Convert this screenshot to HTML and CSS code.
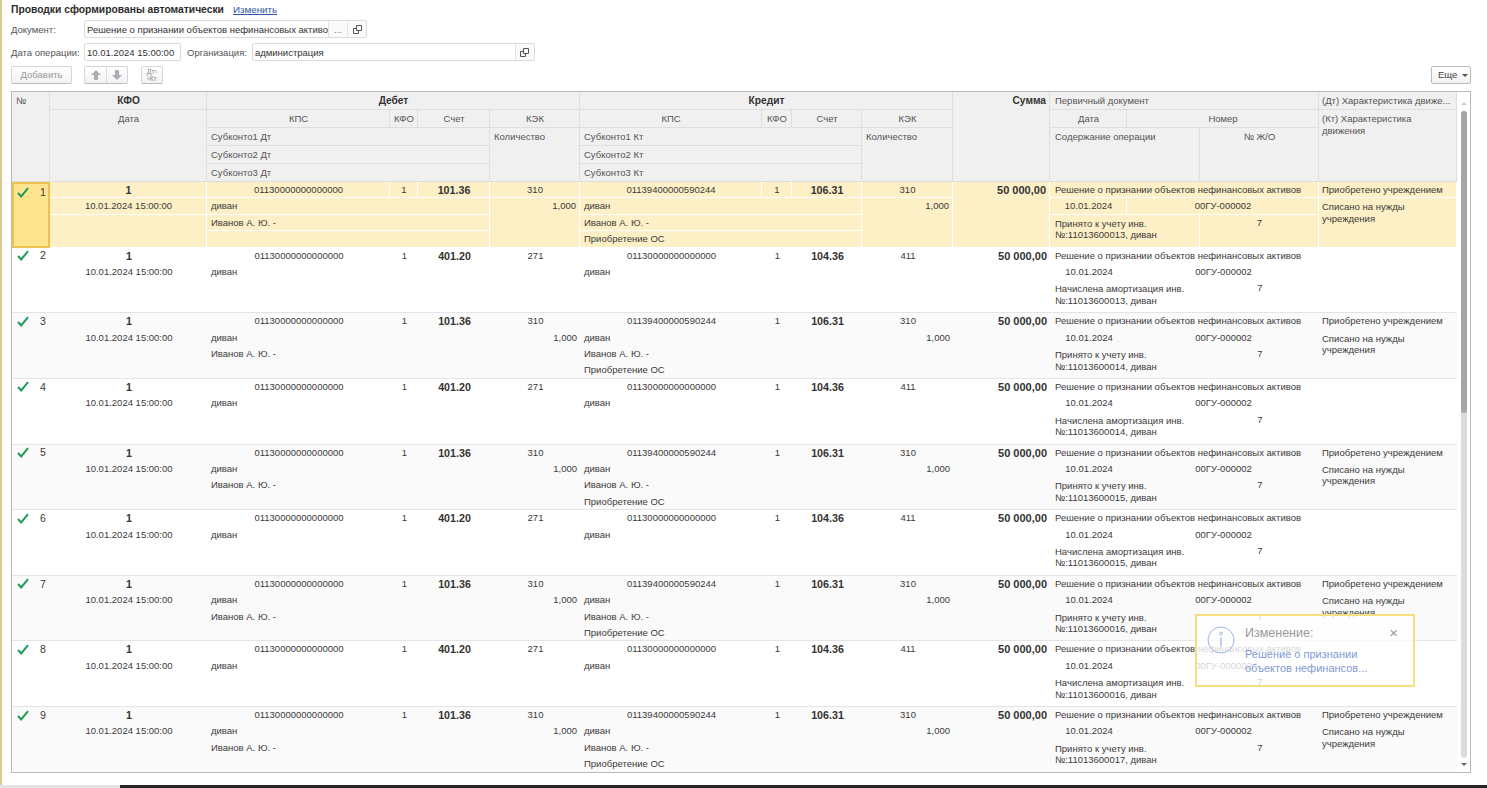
FILE: index.html
```html
<!DOCTYPE html>
<html lang="ru">
<head>
<meta charset="utf-8">
<title>Проводки</title>
<link rel="stylesheet" href="styles.css">
</head>
<body>
<div class="page">
  <div class="form">
    <div class="title-row"><b class="title">Проводки сформированы автоматически</b><a class="link">Изменить</a></div>
    <div class="field-row">
      <label class="lbl lbl-first">Документ:</label>
      <div class="input doc-input"><span class="val">Решение о признании объектов нефинансовых активов</span><span class="ibtn ibtn-dots">...</span><span class="ibtn"><svg width="11" height="11" viewBox="0 0 11 11"><path d="M4.5 1.5h5v5h-5zM1.5 4.5h3M1.5 4.5v5h5v-3" fill="none" stroke="#555"/></svg></span></div>
    </div>
    <div class="field-row">
      <label class="lbl lbl-first">Дата операции:</label>
      <div class="input date-input"><span class="val">10.01.2024 15:00:00</span></div>
      <label class="lbl lbl-org">Организация:</label>
      <div class="input org-input"><span class="val">администрация</span><span class="ibtn"><svg width="11" height="11" viewBox="0 0 11 11"><path d="M4.5 1.5h5v5h-5zM1.5 4.5h3M1.5 4.5v5h5v-3" fill="none" stroke="#555"/></svg></span></div>
    </div>
    <div class="toolbar">
      <button class="btn btn-add">Добавить</button>
      <div class="btn-group">
        <span class="gbtn"><svg width="12" height="12" viewBox="0 0 12 12"><path d="M6 1l5 5H8v5H4V6H1z" fill="#aab0b6"/></svg></span>
        <span class="gbtn"><svg width="12" height="12" viewBox="0 0 12 12"><path d="M6 11l5-5H8V1H4v5H1z" fill="#aab0b6"/></svg></span>
      </div>
      <span class="btn-dtkt"><span>Дт<i>›</i></span><span><i>‹</i>Кт</span></span>
      <button class="btn btn-more">Еще <span class="caret"></span></button>
    </div>
  </div>

  <div class="table">
    <div class="tbody">
      <div class="thead grid">
        <div class="h c1 rall">№</div>
        <div class="h c2 r1 hb ctr">КФО</div>
        <div class="h c2 r2e ctr">Дата</div>
        <div class="h c3-6 r1 hb ctr">Дебет</div>
        <div class="h c3 r2 ctr">КПС</div><div class="h c4 r2 ctr">КФО</div><div class="h c5 r2 ctr">Счет</div><div class="h c6 r2 ctr">КЭК</div>
        <div class="h c3-5 r3">Субконто1 Дт</div><div class="h c3-5 r4">Субконто2 Дт</div><div class="h c3-5 r5">Субконто3 Дт</div>
        <div class="h c6 r3e">Количество</div>
        <div class="h c7-10 r1 hb ctr">Кредит</div>
        <div class="h c7 r2 ctr">КПС</div><div class="h c8 r2 ctr">КФО</div><div class="h c9 r2 ctr">Счет</div><div class="h c10 r2 ctr">КЭК</div>
        <div class="h c7-9 r3">Субконто1 Кт</div><div class="h c7-9 r4">Субконто2 Кт</div><div class="h c7-9 r5">Субконто3 Кт</div>
        <div class="h c10 r3e">Количество</div>
        <div class="h c11 rall hb rgt">Сумма</div>
        <div class="h c12-14 r1 pd">Первичный документ</div>
        <div class="h c12 r2 ctr">Дата</div><div class="h c13-14 r2 ctr">Номер</div>
        <div class="h c12-13 r3e pd">Содержание операции</div><div class="h c14 r3e ctr">№ Ж/О</div>
        <div class="h c15 r1">(Дт) Характеристика движе...</div>
        <div class="h c15 r2e wrap">(Кт) Характеристика движения</div>
      </div>

      <div class="row grid sel">
        <div class="d c1 rr"><span class="num-cell"><svg class="ck" width="12" height="11" viewBox="0 0 12 11"><path d="M1 6l3.2 3.5L11 1.2" fill="none" stroke="#1f9c55" stroke-width="2"/></svg><span class="n">1</span></span></div>
        <div class="d c2 q1 hb ctr">1</div><div class="d c2 q2 ctr">10.01.2024 15:00:00</div><div class="d c2 q3e"></div>
        <div class="d c3 q1 ctr">01130000000000000</div><div class="d c4 q1 ctr">1</div><div class="d c5 q1 hb ctr">101.36</div><div class="d c6 q1 ctr">310</div>
        <div class="d c3-5 q2">диван</div><div class="d c3-5 q3">Иванов А. Ю. -</div><div class="d c3-5 q4"></div>
        <div class="d c6 q2e rgt">1,000</div>
        <div class="d c7 q1 ctr">01139400000590244</div><div class="d c8 q1 ctr">1</div><div class="d c9 q1 hb ctr">106.31</div><div class="d c10 q1 ctr">310</div>
        <div class="d c7-9 q2">диван</div><div class="d c7-9 q3">Иванов А. Ю. -</div><div class="d c7-9 q4">Приобретение ОС</div>
        <div class="d c10 q2e rgt">1,000</div>
        <div class="d c11 rr hb rgt">50 000,00</div>
        <div class="d c12-14 q1 pd">Решение о признании объектов нефинансовых активов</div>
        <div class="d c12 q2 ctr">10.01.2024</div><div class="d c13-14 q2 ctr">00ГУ-000002</div>
        <div class="d c12-13 q3e wrap pd">Принято к учету инв. №:11013600013, диван</div><div class="d c14 q3e ctr">7</div>
        <div class="d c15 q1">Приобретено учреждением</div><div class="d c15 q2e wrap">Списано на нужды учреждения</div>
      </div>

      <div class="row grid">
        <div class="d c1 rr"><span class="num-cell"><svg class="ck" width="12" height="11" viewBox="0 0 12 11"><path d="M1 6l3.2 3.5L11 1.2" fill="none" stroke="#1f9c55" stroke-width="2"/></svg><span class="n">2</span></span></div>
        <div class="d c2 q1 hb ctr">1</div><div class="d c2 q2e ctr">10.01.2024 15:00:00</div>
        <div class="d c3 q1 ctr">01130000000000000</div><div class="d c4 q1 ctr">1</div><div class="d c5 q1 hb ctr">401.20</div><div class="d c6 q1 ctr">271</div>
        <div class="d c3-5 q2">диван</div><div class="d c3-5 q3"></div><div class="d c3-5 q4"></div>
        <div class="d c6 q2e rgt"></div>
        <div class="d c7 q1 ctr">01130000000000000</div><div class="d c8 q1 ctr">1</div><div class="d c9 q1 hb ctr">104.36</div><div class="d c10 q1 ctr">411</div>
        <div class="d c7-9 q2">диван</div><div class="d c7-9 q3"></div><div class="d c7-9 q4"></div>
        <div class="d c10 q2e rgt"></div>
        <div class="d c11 rr hb rgt">50 000,00</div>
        <div class="d c12-14 q1 pd">Решение о признании объектов нефинансовых активов</div>
        <div class="d c12 q2 ctr">10.01.2024</div><div class="d c13-14 q2 ctr">00ГУ-000002</div>
        <div class="d c12-13 q3e wrap pd">Начислена амортизация инв. №:11013600013, диван</div><div class="d c14 q3e ctr">7</div>
        <div class="d c15 q1"></div><div class="d c15 q2e wrap"></div>
      </div>

      <div class="row grid alt">
        <div class="d c1 rr"><span class="num-cell"><svg class="ck" width="12" height="11" viewBox="0 0 12 11"><path d="M1 6l3.2 3.5L11 1.2" fill="none" stroke="#1f9c55" stroke-width="2"/></svg><span class="n">3</span></span></div>
        <div class="d c2 q1 hb ctr">1</div><div class="d c2 q2e ctr">10.01.2024 15:00:00</div>
        <div class="d c3 q1 ctr">01130000000000000</div><div class="d c4 q1 ctr">1</div><div class="d c5 q1 hb ctr">101.36</div><div class="d c6 q1 ctr">310</div>
        <div class="d c3-5 q2">диван</div><div class="d c3-5 q3">Иванов А. Ю. -</div><div class="d c3-5 q4"></div>
        <div class="d c6 q2e rgt">1,000</div>
        <div class="d c7 q1 ctr">01139400000590244</div><div class="d c8 q1 ctr">1</div><div class="d c9 q1 hb ctr">106.31</div><div class="d c10 q1 ctr">310</div>
        <div class="d c7-9 q2">диван</div><div class="d c7-9 q3">Иванов А. Ю. -</div><div class="d c7-9 q4">Приобретение ОС</div>
        <div class="d c10 q2e rgt">1,000</div>
        <div class="d c11 rr hb rgt">50 000,00</div>
        <div class="d c12-14 q1 pd">Решение о признании объектов нефинансовых активов</div>
        <div class="d c12 q2 ctr">10.01.2024</div><div class="d c13-14 q2 ctr">00ГУ-000002</div>
        <div class="d c12-13 q3e wrap pd">Принято к учету инв. №:11013600014, диван</div><div class="d c14 q3e ctr">7</div>
        <div class="d c15 q1">Приобретено учреждением</div><div class="d c15 q2e wrap">Списано на нужды учреждения</div>
      </div>

      <div class="row grid">
        <div class="d c1 rr"><span class="num-cell"><svg class="ck" width="12" height="11" viewBox="0 0 12 11"><path d="M1 6l3.2 3.5L11 1.2" fill="none" stroke="#1f9c55" stroke-width="2"/></svg><span class="n">4</span></span></div>
        <div class="d c2 q1 hb ctr">1</div><div class="d c2 q2e ctr">10.01.2024 15:00:00</div>
        <div class="d c3 q1 ctr">01130000000000000</div><div class="d c4 q1 ctr">1</div><div class="d c5 q1 hb ctr">401.20</div><div class="d c6 q1 ctr">271</div>
        <div class="d c3-5 q2">диван</div><div class="d c3-5 q3"></div><div class="d c3-5 q4"></div>
        <div class="d c6 q2e rgt"></div>
        <div class="d c7 q1 ctr">01130000000000000</div><div class="d c8 q1 ctr">1</div><div class="d c9 q1 hb ctr">104.36</div><div class="d c10 q1 ctr">411</div>
        <div class="d c7-9 q2">диван</div><div class="d c7-9 q3"></div><div class="d c7-9 q4"></div>
        <div class="d c10 q2e rgt"></div>
        <div class="d c11 rr hb rgt">50 000,00</div>
        <div class="d c12-14 q1 pd">Решение о признании объектов нефинансовых активов</div>
        <div class="d c12 q2 ctr">10.01.2024</div><div class="d c13-14 q2 ctr">00ГУ-000002</div>
        <div class="d c12-13 q3e wrap pd">Начислена амортизация инв. №:11013600014, диван</div><div class="d c14 q3e ctr">7</div>
        <div class="d c15 q1"></div><div class="d c15 q2e wrap"></div>
      </div>

      <div class="row grid alt">
        <div class="d c1 rr"><span class="num-cell"><svg class="ck" width="12" height="11" viewBox="0 0 12 11"><path d="M1 6l3.2 3.5L11 1.2" fill="none" stroke="#1f9c55" stroke-width="2"/></svg><span class="n">5</span></span></div>
        <div class="d c2 q1 hb ctr">1</div><div class="d c2 q2e ctr">10.01.2024 15:00:00</div>
        <div class="d c3 q1 ctr">01130000000000000</div><div class="d c4 q1 ctr">1</div><div class="d c5 q1 hb ctr">101.36</div><div class="d c6 q1 ctr">310</div>
        <div class="d c3-5 q2">диван</div><div class="d c3-5 q3">Иванов А. Ю. -</div><div class="d c3-5 q4"></div>
        <div class="d c6 q2e rgt">1,000</div>
        <div class="d c7 q1 ctr">01139400000590244</div><div class="d c8 q1 ctr">1</div><div class="d c9 q1 hb ctr">106.31</div><div class="d c10 q1 ctr">310</div>
        <div class="d c7-9 q2">диван</div><div class="d c7-9 q3">Иванов А. Ю. -</div><div class="d c7-9 q4">Приобретение ОС</div>
        <div class="d c10 q2e rgt">1,000</div>
        <div class="d c11 rr hb rgt">50 000,00</div>
        <div class="d c12-14 q1 pd">Решение о признании объектов нефинансовых активов</div>
        <div class="d c12 q2 ctr">10.01.2024</div><div class="d c13-14 q2 ctr">00ГУ-000002</div>
        <div class="d c12-13 q3e wrap pd">Принято к учету инв. №:11013600015, диван</div><div class="d c14 q3e ctr">7</div>
        <div class="d c15 q1">Приобретено учреждением</div><div class="d c15 q2e wrap">Списано на нужды учреждения</div>
      </div>

      <div class="row grid">
        <div class="d c1 rr"><span class="num-cell"><svg class="ck" width="12" height="11" viewBox="0 0 12 11"><path d="M1 6l3.2 3.5L11 1.2" fill="none" stroke="#1f9c55" stroke-width="2"/></svg><span class="n">6</span></span></div>
        <div class="d c2 q1 hb ctr">1</div><div class="d c2 q2e ctr">10.01.2024 15:00:00</div>
        <div class="d c3 q1 ctr">01130000000000000</div><div class="d c4 q1 ctr">1</div><div class="d c5 q1 hb ctr">401.20</div><div class="d c6 q1 ctr">271</div>
        <div class="d c3-5 q2">диван</div><div class="d c3-5 q3"></div><div class="d c3-5 q4"></div>
        <div class="d c6 q2e rgt"></div>
        <div class="d c7 q1 ctr">01130000000000000</div><div class="d c8 q1 ctr">1</div><div class="d c9 q1 hb ctr">104.36</div><div class="d c10 q1 ctr">411</div>
        <div class="d c7-9 q2">диван</div><div class="d c7-9 q3"></div><div class="d c7-9 q4"></div>
        <div class="d c10 q2e rgt"></div>
        <div class="d c11 rr hb rgt">50 000,00</div>
        <div class="d c12-14 q1 pd">Решение о признании объектов нефинансовых активов</div>
        <div class="d c12 q2 ctr">10.01.2024</div><div class="d c13-14 q2 ctr">00ГУ-000002</div>
        <div class="d c12-13 q3e wrap pd">Начислена амортизация инв. №:11013600015, диван</div><div class="d c14 q3e ctr">7</div>
        <div class="d c15 q1"></div><div class="d c15 q2e wrap"></div>
      </div>

      <div class="row grid alt">
        <div class="d c1 rr"><span class="num-cell"><svg class="ck" width="12" height="11" viewBox="0 0 12 11"><path d="M1 6l3.2 3.5L11 1.2" fill="none" stroke="#1f9c55" stroke-width="2"/></svg><span class="n">7</span></span></div>
        <div class="d c2 q1 hb ctr">1</div><div class="d c2 q2e ctr">10.01.2024 15:00:00</div>
        <div class="d c3 q1 ctr">01130000000000000</div><div class="d c4 q1 ctr">1</div><div class="d c5 q1 hb ctr">101.36</div><div class="d c6 q1 ctr">310</div>
        <div class="d c3-5 q2">диван</div><div class="d c3-5 q3">Иванов А. Ю. -</div><div class="d c3-5 q4"></div>
        <div class="d c6 q2e rgt">1,000</div>
        <div class="d c7 q1 ctr">01139400000590244</div><div class="d c8 q1 ctr">1</div><div class="d c9 q1 hb ctr">106.31</div><div class="d c10 q1 ctr">310</div>
        <div class="d c7-9 q2">диван</div><div class="d c7-9 q3">Иванов А. Ю. -</div><div class="d c7-9 q4">Приобретение ОС</div>
        <div class="d c10 q2e rgt">1,000</div>
        <div class="d c11 rr hb rgt">50 000,00</div>
        <div class="d c12-14 q1 pd">Решение о признании объектов нефинансовых активов</div>
        <div class="d c12 q2 ctr">10.01.2024</div><div class="d c13-14 q2 ctr">00ГУ-000002</div>
        <div class="d c12-13 q3e wrap pd">Принято к учету инв. №:11013600016, диван</div><div class="d c14 q3e ctr">7</div>
        <div class="d c15 q1">Приобретено учреждением</div><div class="d c15 q2e wrap">Списано на нужды учреждения</div>
      </div>

      <div class="row grid">
        <div class="d c1 rr"><span class="num-cell"><svg class="ck" width="12" height="11" viewBox="0 0 12 11"><path d="M1 6l3.2 3.5L11 1.2" fill="none" stroke="#1f9c55" stroke-width="2"/></svg><span class="n">8</span></span></div>
        <div class="d c2 q1 hb ctr">1</div><div class="d c2 q2e ctr">10.01.2024 15:00:00</div>
        <div class="d c3 q1 ctr">01130000000000000</div><div class="d c4 q1 ctr">1</div><div class="d c5 q1 hb ctr">401.20</div><div class="d c6 q1 ctr">271</div>
        <div class="d c3-5 q2">диван</div><div class="d c3-5 q3"></div><div class="d c3-5 q4"></div>
        <div class="d c6 q2e rgt"></div>
        <div class="d c7 q1 ctr">01130000000000000</div><div class="d c8 q1 ctr">1</div><div class="d c9 q1 hb ctr">104.36</div><div class="d c10 q1 ctr">411</div>
        <div class="d c7-9 q2">диван</div><div class="d c7-9 q3"></div><div class="d c7-9 q4"></div>
        <div class="d c10 q2e rgt"></div>
        <div class="d c11 rr hb rgt">50 000,00</div>
        <div class="d c12-14 q1 pd">Решение о признании объектов нефинансовых активов</div>
        <div class="d c12 q2 ctr">10.01.2024</div><div class="d c13-14 q2 ctr">00ГУ-000002</div>
        <div class="d c12-13 q3e wrap pd">Начислена амортизация инв. №:11013600016, диван</div><div class="d c14 q3e ctr">7</div>
        <div class="d c15 q1"></div><div class="d c15 q2e wrap"></div>
      </div>

      <div class="row grid alt">
        <div class="d c1 rr"><span class="num-cell"><svg class="ck" width="12" height="11" viewBox="0 0 12 11"><path d="M1 6l3.2 3.5L11 1.2" fill="none" stroke="#1f9c55" stroke-width="2"/></svg><span class="n">9</span></span></div>
        <div class="d c2 q1 hb ctr">1</div><div class="d c2 q2e ctr">10.01.2024 15:00:00</div>
        <div class="d c3 q1 ctr">01130000000000000</div><div class="d c4 q1 ctr">1</div><div class="d c5 q1 hb ctr">101.36</div><div class="d c6 q1 ctr">310</div>
        <div class="d c3-5 q2">диван</div><div class="d c3-5 q3">Иванов А. Ю. -</div><div class="d c3-5 q4"></div>
        <div class="d c6 q2e rgt">1,000</div>
        <div class="d c7 q1 ctr">01139400000590244</div><div class="d c8 q1 ctr">1</div><div class="d c9 q1 hb ctr">106.31</div><div class="d c10 q1 ctr">310</div>
        <div class="d c7-9 q2">диван</div><div class="d c7-9 q3">Иванов А. Ю. -</div><div class="d c7-9 q4">Приобретение ОС</div>
        <div class="d c10 q2e rgt">1,000</div>
        <div class="d c11 rr hb rgt">50 000,00</div>
        <div class="d c12-14 q1 pd">Решение о признании объектов нефинансовых активов</div>
        <div class="d c12 q2 ctr">10.01.2024</div><div class="d c13-14 q2 ctr">00ГУ-000002</div>
        <div class="d c12-13 q3e wrap pd">Принято к учету инв. №:11013600017, диван</div><div class="d c14 q3e ctr">7</div>
        <div class="d c15 q1">Приобретено учреждением</div><div class="d c15 q2e wrap">Списано на нужды учреждения</div>
      </div>
    </div>
    <div class="scroll">
      <span class="arrow arrow-up"></span>
      <div class="track"><div class="thumb"></div></div>
      <span class="arrow arrow-down"></span>
    </div>
  </div>

  <div class="toast">
    <svg class="toast-i" width="28" height="28" viewBox="0 0 28 28"><circle cx="14" cy="14" r="13" fill="none" stroke="#9db8e0"/><circle cx="14" cy="7.5" r="1.4" fill="none" stroke="#9db8e0"/><path d="M14 11.5v9" stroke="#9db8e0" stroke-width="1.4"/></svg>
    <div class="toast-body">
      <div class="toast-title">Изменение:</div>
      <div class="toast-link">Решение о признании<br>объектов нефинансов...</div>
    </div>
    <span class="toast-x">×</span>
  </div>
</div>
<div class="bottom"><span class="bottom-l"></span><span class="bottom-d"></span></div>
</body>
</html>
```
FILE: styles.css
```css
* { box-sizing: border-box; }
html, body { margin: 0; padding: 0; height: 788px; overflow: hidden; background: #fff; }
body { font-family: "Liberation Sans", Arial, sans-serif; font-size: 9.5px; color: #3a3a3a; }
.page { position: relative; height: 785px; border-left: 2px solid #d8cc8c; padding: 0 16px 0 9px; display: flex; flex-direction: column; }
.form { height: 91px; padding-top: 3px; flex: none; }
.title-row { height: 14px; line-height: 14px; display: flex; gap: 9px; }
.title { font-size: 10.3px; font-weight: bold; color: #2b2b2b; }
.link { color: #2f54a8; text-decoration: underline; font-size: 9.8px; }
.field-row { display: flex; align-items: center; margin-top: 3px; height: 18px; }
.field-row + .field-row { margin-top: 5px; }
.lbl { color: #555; white-space: nowrap; }
.lbl-first { width: 73px; flex: none; }
.lbl-org { margin-left: 6px; margin-right: 5px; }
.input { height: 18px; border: 1px solid #dcdcdc; border-radius: 2px; display: flex; align-items: center; background: #fff; overflow: hidden; }
.doc-input { width: 283px; }
.date-input { width: 97px; }
.org-input { width: 283px; }
.val { flex: 1; min-width: 0; padding-left: 2px; white-space: nowrap; overflow: hidden; color: #333; }
.ibtn { width: 19px; height: 16px; border-left: 1px solid #e2e2e2; display: flex; align-items: center; justify-content: center; color: #777; background: #fafafa; flex: none; }
.toolbar { display: flex; align-items: center; margin-top: 4px; height: 19px; }
.btn { font: inherit; height: 18px; border: 1px solid #d6d6d6; border-bottom-color: #bdbdbd; border-radius: 2px; background: linear-gradient(#fff, #f2f2f2); padding: 0; color: #999; }
.btn-add { width: 61px; }
.btn-group { display: flex; margin-left: 12px; border: 1px solid #d6d6d6; border-bottom-color: #bdbdbd; border-radius: 2px; height: 18px; background: linear-gradient(#fff, #f2f2f2); }
.gbtn { width: 21px; display: flex; align-items: center; justify-content: center; }
.gbtn + .gbtn { border-left: 1px solid #ddd; }
.btn-dtkt { margin-left: 13px; width: 22px; height: 18px; border: 1px solid #d6d6d6; border-bottom-color: #bdbdbd; border-radius: 2px; background: linear-gradient(#fff, #f2f2f2); display: flex; flex-direction: column; align-items: center; font-size: 7px; line-height: 7.5px; color: #8a8a8a; padding-top: 1px; }
.btn-dtkt i { font-style: normal; }
.btn-more { margin-left: auto; width: 40px; color: #444; border-color: #bbb; padding-left: 4px; }
.caret { display: inline-block; border: 3px solid transparent; border-top-color: #555; border-bottom: 0; vertical-align: 1px; margin-left: 2px; }

.table { width: 1460px; height: 682px; border: 1px solid #b9b9b9; display: flex; overflow: hidden; background: #fff; flex: none; }
.tbody { width: 1445px; flex: none; }
.grid { display: grid; grid-template-columns: 38px 157px 183px 28px 72px 90px 182px 30px 70px 91px 97px 77px 73px 119px 138px; }
.thead { height: 90px; grid-template-rows: repeat(5, 18px); background: #f0f0f0; border-bottom: 1px solid #ddd; }
.row { height: 65.625px; grid-template-rows: repeat(4, 16.4px); border-bottom: 1px solid #e4e4e4; }
.alt { background: #fafafa; }
.sel { background: #fdf0c6; border-bottom-color: #fff; }

.h, .d { padding: 0 3px 0 4px; line-height: 16.4px; white-space: nowrap; overflow: hidden; min-width: 0; }
.h { color: #555; line-height: 17px; }
.thead .h { border-right: 1px solid #dedede; border-bottom: 1px solid #dedede; }
.sel .d { border-right: 1px solid #fff; border-bottom: 1px solid #fff; }
.wrap { white-space: normal; line-height: 11.5px; padding-top: 3px; }
.h.wrap { padding-top: 3px; line-height: 12px; }
.pd { padding-left: 5px; }
.c15 { padding-left: 3px; }
.hb { font-weight: bold; color: #333; }
.h.hb { font-size: 10.2px; }
.d.hb { font-size: 10.7px; }
.d.c11 { font-size: 11px; }
.ctr { text-align: center; }
.rgt { text-align: right; }

.c1 { grid-column: 1; } .c2 { grid-column: 2; } .c3 { grid-column: 3; } .c4 { grid-column: 4; } .c5 { grid-column: 5; } .c6 { grid-column: 6; }
.c7 { grid-column: 7; } .c8 { grid-column: 8; } .c9 { grid-column: 9; } .c10 { grid-column: 10; } .c11 { grid-column: 11; } .c12 { grid-column: 12; } .c14 { grid-column: 14; } .c15 { grid-column: 15; }
.c3-5 { grid-column: 3 / 6; } .c3-6 { grid-column: 3 / 7; } .c7-9 { grid-column: 7 / 10; } .c7-10 { grid-column: 7 / 11; }
.c12-14 { grid-column: 12 / 15; } .c12-13 { grid-column: 12 / 14; } .c13-14 { grid-column: 13 / 15; }
.r1 { grid-row: 1; } .r2 { grid-row: 2; } .r3 { grid-row: 3; } .r4 { grid-row: 4; } .r5 { grid-row: 5; }
.rall { grid-row: 1 / 6; } .r2e { grid-row: 2 / 6; } .r3e { grid-row: 3 / 6; }
.q1 { grid-row: 1; } .q2 { grid-row: 2; } .q3 { grid-row: 3; } .q4 { grid-row: 4; }
.rr { grid-row: 1 / 5; } .q2e { grid-row: 2 / 5; } .q3e { grid-row: 3 / 5; }

.num-cell { display: flex; align-items: center; height: 16px; gap: 11px; padding-left: 1px; }
.n { font-size: 10.5px; }
.d.c1 { padding-left: 4px; }
.sel .d.c1 { background: #ffe48f; border: 2px solid #eec24f; padding: 0 1px 0 2px; }
.ck { flex: none; }

.scroll { width: 13px; flex: none; background: #fff; display: flex; flex-direction: column; align-items: center; }
.arrow { width: 0; flex: none; }
.arrow-up { border: 3px solid transparent; border-bottom-color: #ccc; height: 0; margin: 7px 0 6px; }
.arrow-down { border: 3px solid transparent; border-top-color: #666; height: 0; margin: 5px 0 3px; }
.track { flex: 1; width: 6px; background: #dcdcdc; border-radius: 3px; }
.thumb { height: 302px; background: #a6a6a6; border-radius: 3px; }

.toast { position: absolute; left: 1193px; top: 614px; width: 220px; height: 73px; border: 2px solid #f7df80; background: rgba(255,255,255,.78); display: flex; }
.toast-i { margin: 10px 0 0 10px; flex: none; }
.toast-body { margin-left: 10px; padding-top: 10px; }
.toast-title { font-size: 12.5px; color: #999; line-height: 15px; }
.toast-link { font-size: 11px; color: #7f9ad6; line-height: 14px; margin-top: 6px; white-space: nowrap; }
.toast-x { position: absolute; right: 15px; top: 9px; color: #999; font-size: 15px; line-height: 15px; }

.bottom { height: 3px; display: flex; }
.bottom-l { width: 120px; background: #e4e4e4; }
.bottom-d { flex: 1; background: #2a2626; }
```
